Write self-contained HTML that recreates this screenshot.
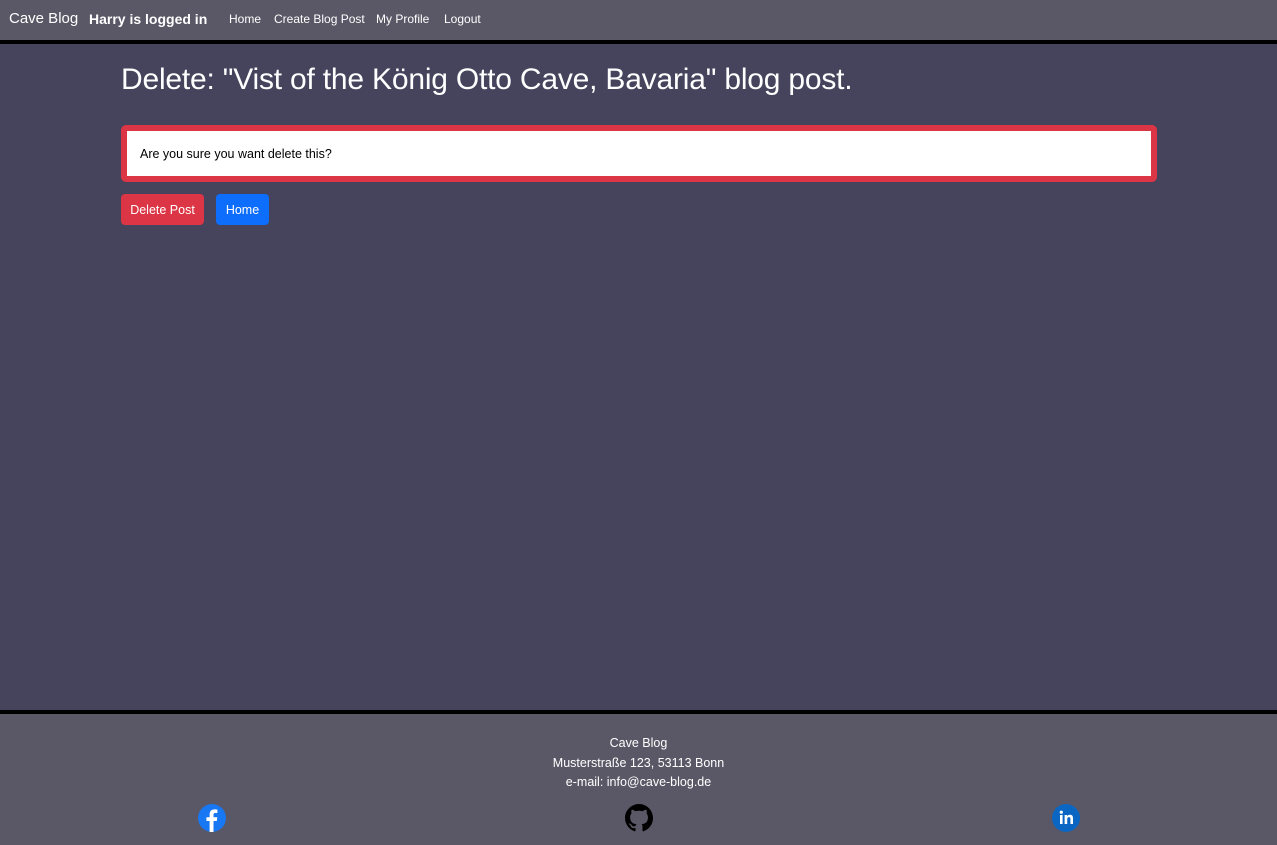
<!DOCTYPE html>
<html><head><meta charset="utf-8"><style>
*{box-sizing:border-box;margin:0;padding:0}
body{width:1277px;height:845px;background:#46435c;font-family:"Liberation Sans",sans-serif;color:#fff;position:relative;overflow:hidden}
nav{height:44px;background:#5a5866;border-bottom:4px solid #000;position:relative}
nav span{position:absolute;top:10px;font-size:15px}
nav .s{font-size:12px;top:12px}
h1{position:absolute;left:121px;top:63px;font-size:30px;font-weight:normal;letter-spacing:-0.2px}
.alert{position:absolute;left:121px;top:125px;width:1036px;height:57px;background:#fff;border:6px solid #dc3545;border-radius:5px;color:#000;font-size:12.5px;padding:16px 13px}
.btn{position:absolute;top:194px;height:31px;border-radius:4px;font-size:12.5px;line-height:32px;text-align:center;color:#fff}
footer{position:absolute;left:0;top:710px;width:1277px;height:135px;background:#5a5866;border-top:4px solid #000;text-align:center;font-size:12.5px}
footer p{line-height:19.5px}
</style></head><body>
<nav>
<span style="left:9px">Cave Blog</span>
<span style="left:89px;font-weight:bold;font-size:14px;top:11px">Harry is logged in</span>
<span class="s" style="left:229px">Home</span>
<span class="s" style="left:274px">Create Blog Post</span>
<span class="s" style="left:376px">My Profile</span>
<span class="s" style="left:444px">Logout</span>
</nav>
<h1>Delete: "Vist of the König Otto Cave, Bavaria" blog post.</h1>
<div class="alert">Are you sure you want delete this?</div>
<div class="btn" style="left:121px;width:83px;background:#dc3545">Delete Post</div>
<div class="btn" style="left:216px;width:53px;background:#0d6efd">Home</div>
<footer>
<div style="padding-top:20px"><p>Cave Blog</p><p>Musterstraße 123, 53113 Bonn</p><p>e-mail: info@cave-blog.de</p></div>
<svg style="position:absolute;left:198px;top:90px" width="28" height="28" viewBox="0 0 28 28"><circle cx="14" cy="14" r="14" fill="#1877f2"/><path d="M15.5 28V17h3.3l.5-3.8h-3.8v-2.4c0-1.1.3-1.8 1.9-1.8h2V5.6c-.4 0-1.6-.2-3-.2-2.9 0-4.8 1.8-4.8 5v2.8H8.4V17h3.2v11z" fill="#fff"/></svg>
<svg style="position:absolute;left:625px;top:90px" width="28" height="28" viewBox="0 0 16 16"><path fill="#000" d="M8 0C3.58 0 0 3.58 0 8c0 3.54 2.29 6.53 5.47 7.59.4.07.55-.17.55-.38 0-.19-.01-.82-.01-1.49-2.01.37-2.530-.49-2.69-.94-.09-.23-.48-.94-.82-1.13-.28-.15-.68-.52-.01-.53.63-.01 1.08.58 1.23.82.72 1.21 1.87.87 2.33.66.07-.52.28-.87.51-1.07-1.78-.2-3.64-.89-3.64-3.95 0-.87.31-1.59.82-2.15-.08-.2-.36-1.02.08-2.12 0 0 .67-.21 2.2.82.64-.18 1.32-.27 2-.27.68 0 1.36.09 2 .27 1.53-1.04 2.2-.82 2.2-.82.44 1.1.16 1.92.08 2.12.51.56.82 1.27.82 2.15 0 3.07-1.87 3.75-3.65 3.95.29.25.54.73.54 1.48 0 1.070-.01 1.93-.01 2.2 0 .21.15.46.55.38A8.013 8.013 0 0016 8c0-4.42-3.58-8-8-8z"/></svg>
<svg style="position:absolute;left:1052px;top:90px" width="28" height="28" viewBox="0 0 28 28"><circle cx="14" cy="14" r="14" fill="#0a66c2"/><rect x="8" y="11" width="2.6" height="9" fill="#fff"/><circle cx="9.3" cy="8.2" r="1.6" fill="#fff"/><path d="M12.6 11h2.5v1.3c.5-.9 1.6-1.5 2.9-1.5 2.4 0 3 1.5 3 3.6V20h-2.6v-5c0-1.1-.3-1.9-1.4-1.9-1.2 0-1.8.9-1.8 2.1V20h-2.6z" fill="#fff"/></svg>
</footer>
</body></html>
